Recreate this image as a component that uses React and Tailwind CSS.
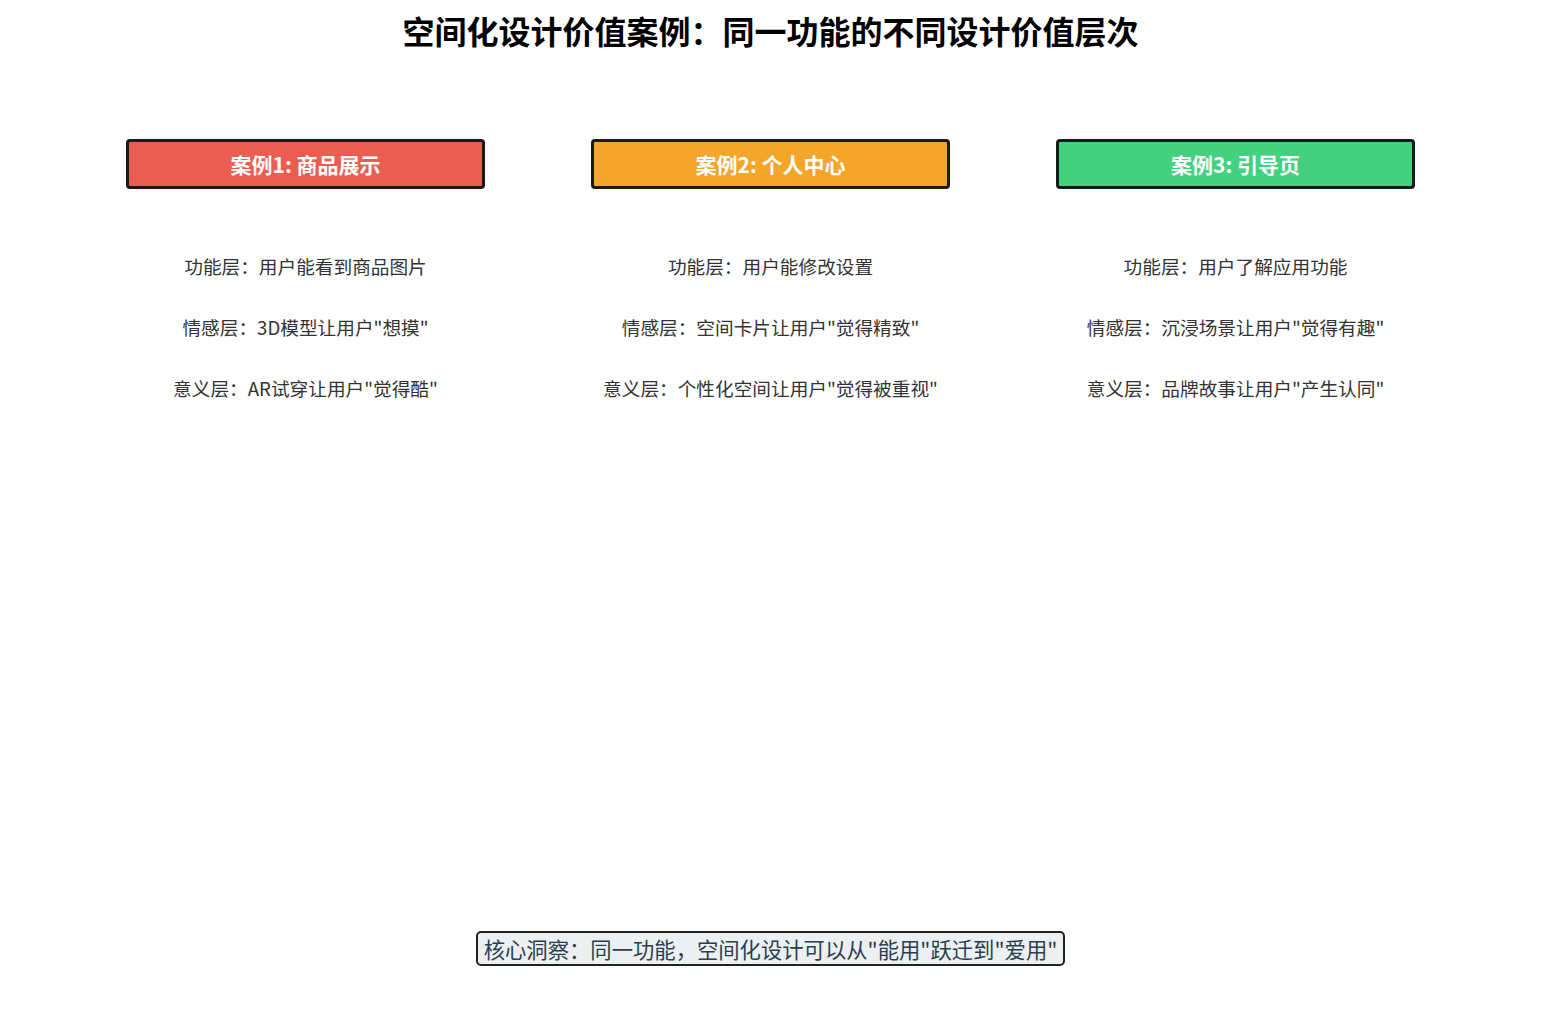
import React from "react";

const cases = [
  {
    title: "案例1: 商品展示",
    bg: "bg-[#e95e50]",
    lines: [
      "功能层：用户能看到商品图片",
      "情感层：3D模型让用户\"想摸\"",
      "意义层：AR试穿让用户\"觉得酷\"",
    ],
  },
  {
    title: "案例2: 个人中心",
    bg: "bg-[#f4a62a]",
    lines: [
      "功能层：用户能修改设置",
      "情感层：空间卡片让用户\"觉得精致\"",
      "意义层：个性化空间让用户\"觉得被重视\"",
    ],
  },
  {
    title: "案例3: 引导页",
    bg: "bg-[#43d17f]",
    lines: [
      "功能层：用户了解应用功能",
      "情感层：沉浸场景让用户\"觉得有趣\"",
      "意义层：品牌故事让用户\"产生认同\"",
    ],
  },
];

export default function App() {
  return (
    <div
      className="flex h-[1021px] w-full flex-col items-center bg-white"
      style={{ fontFamily: '"Noto Sans CJK SC", "Noto Sans", sans-serif' }}
    >
      <div className="flex h-[60px] items-center">
        <h1 className="text-[32px] font-bold leading-none text-black">
          空间化设计价值案例：同一功能的不同设计价值层次
        </h1>
      </div>

      <div className="mt-[79px] grid w-[1395px] grid-cols-3">
        {cases.map((c) => (
          <div key={c.title} className="flex flex-col items-center">
            <div
              className={`flex h-[50px] w-[359px] items-center justify-center rounded-[4px] border-[3px] border-[#1a1a1a] ${c.bg}`}
            >
              <span className="text-[21px] font-bold leading-none text-white">
                {c.title}
              </span>
            </div>
            <div className="mt-[47px] flex flex-col items-center">
              {c.lines.map((l) => (
                <div
                  key={l}
                  className="flex h-[61px] items-center text-[18.67px] leading-none text-[#333333]"
                >
                  {l}
                </div>
              ))}
            </div>
          </div>
        ))}
      </div>

      <div className="mt-auto mb-[55px] flex h-[35px] items-center rounded-[5px] border-2 border-[#222222] bg-[#ecf0f1] px-[6px]">
        <span className="text-[21.33px] leading-none text-[#2c3e50]">
          核心洞察：同一功能，空间化设计可以从"能用"跃迁到"爱用"
        </span>
      </div>
    </div>
  );
}
